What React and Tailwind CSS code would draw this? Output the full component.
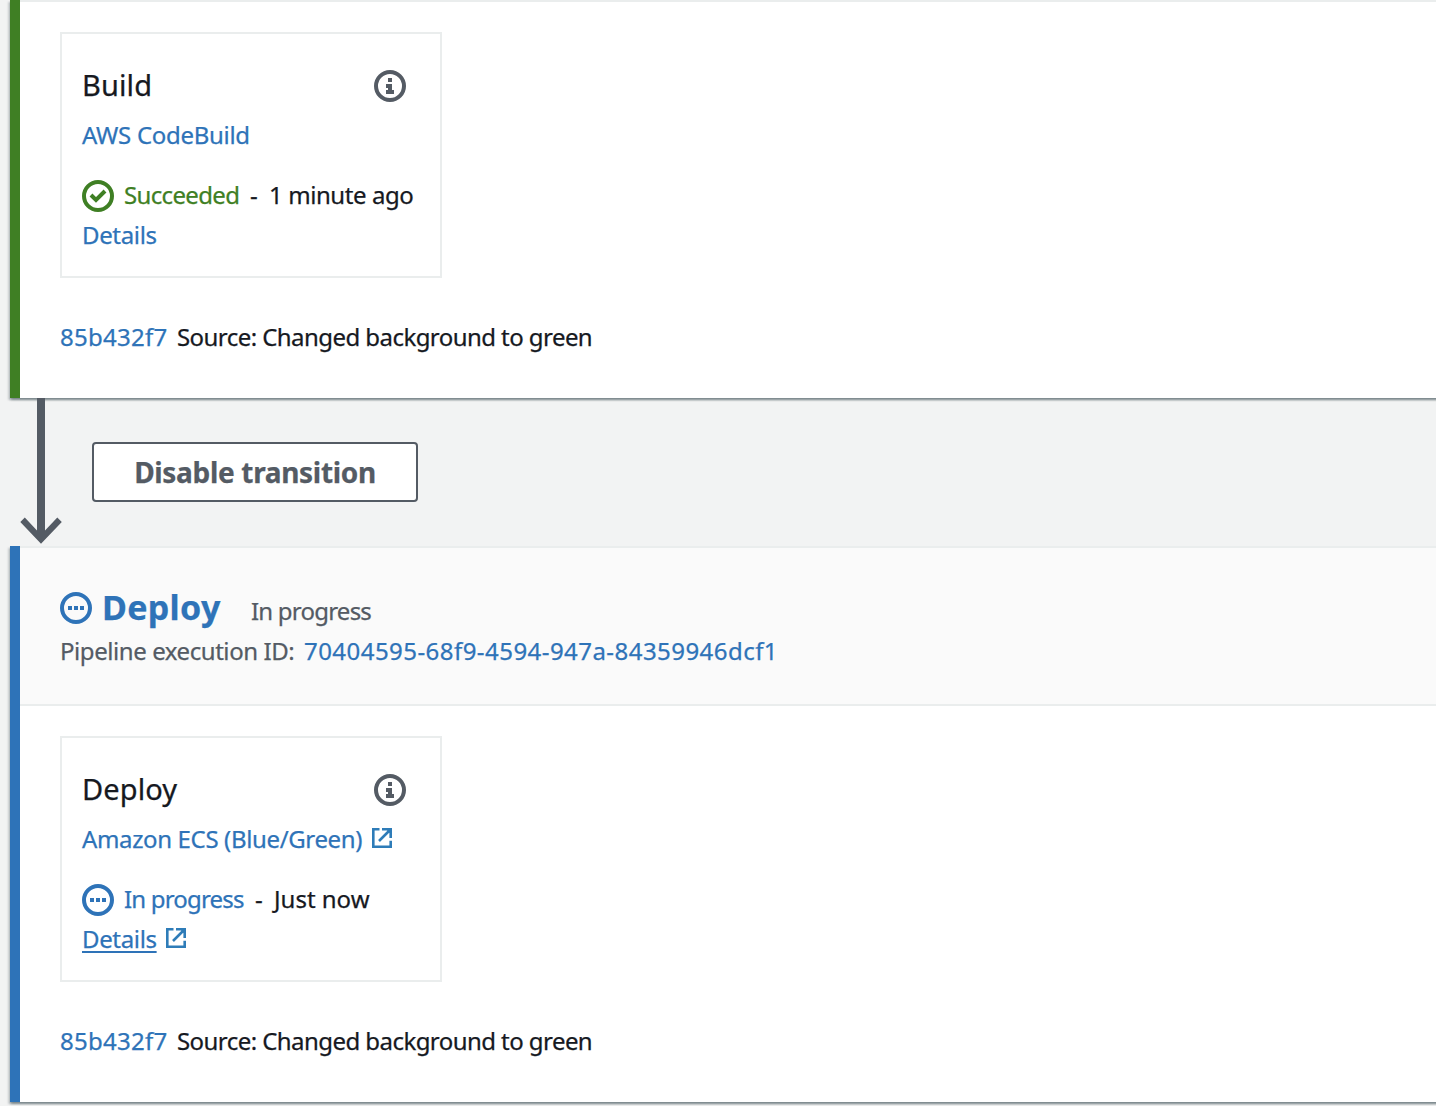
import React from "react";

const SHADOW = "shadow-[0_2px_2px_0_rgba(0,28,36,0.3),2px_2px_2px_0_rgba(0,28,36,0.15),-2px_2px_2px_0_rgba(0,28,36,0.15)]";

function InfoIcon() {
  return (
    <svg className="mt-0.5 size-8 shrink-0" viewBox="0 0 32 32" fill="none">
      <circle cx="16" cy="16" r="14" stroke="#545b64" strokeWidth="4" />
      <path d="M14 8h4v4h-4zM12 14h6v6h2v4h-8v-4h2v-2h-2z" fill="#545b64" />
    </svg>
  );
}

function ProgressIcon() {
  return (
    <svg className="mt-0.5 size-8 shrink-0" viewBox="0 0 32 32" fill="none">
      <circle cx="16" cy="16" r="14" stroke="#2e73b8" strokeWidth="4" />
      <path d="M8 14h4v4H8zM14 14h4v4h-4zM20 14h4v4h-4z" fill="#2e73b8" />
    </svg>
  );
}

function SuccessIcon() {
  return (
    <svg className="mt-0.5 size-8 shrink-0" viewBox="0 0 32 32" fill="none">
      <circle cx="16" cy="16" r="14" stroke="#3f7f24" strokeWidth="4" />
      <path d="M9 15l5 5 9-9" stroke="#3f7f24" strokeWidth="4" />
    </svg>
  );
}

function ExternalIcon() {
  return (
    <svg className="mb-0.5 size-5 shrink-0" viewBox="0 0 20 20" fill="none" stroke="#2e7cb8" strokeWidth="2.6">
      <path d="M7.5 1.3H1.3v17.4h17.4v-6" />
      <path d="M10 1.3h8.7V10M18 2L7 13" />
      <path d="M13 0h7v7z" fill="#2e7cb8" stroke="none" />
    </svg>
  );
}

function Commit() {
  return (
    <div className="flex h-10 items-center text-2xl leading-10">
      <a className="w-[117px] tracking-[0.25px] text-[#2e73b8]">85b432f7</a>
      <span className="tracking-[-0.56px]">Source: Changed background to green</span>
    </div>
  );
}

function Card({ title, children }) {
  return (
    <div className="h-[246px] w-[382px] border-2 border-[#eaeded] bg-white px-5 pt-[31px] text-2xl leading-10">
      <div className="flex h-10 items-center justify-between pr-3.5">
        {title}
        <InfoIcon />
      </div>
      {children}
    </div>
  );
}

export default function App() {
  return (
    <div className="h-[1106px] overflow-hidden whitespace-nowrap bg-[#f2f3f3] pl-2.5 font-['Noto_Sans',sans-serif] text-[#16191f] [-webkit-text-stroke:0.25px]">
      <section className={`-mr-2.5 flex h-[398px] ${SHADOW}`}>
        <div className="w-2.5 bg-[#3f7f24]" />
        <div className="flex-1 border-t-2 border-[#eaeded] bg-white pl-10 pt-[30px]">
          <Card title={<h3 className="text-[29px] tracking-[0.1px]">Build</h3>}>
            <div className="mt-2.5 tracking-[-0.3px] text-[#2e73b8]">AWS CodeBuild</div>
            <div className="mt-5 flex h-10 items-center">
              <SuccessIcon />
              <span className="ml-2.5 w-[126px] tracking-[-0.65px] text-[#3f7f24]">Succeeded</span>
              <span className="w-[19px]">-</span>
              <span className="tracking-[-0.42px]">1 minute ago</span>
            </div>
            <div className="tracking-[-0.35px] text-[#2e73b8]">Details</div>
          </Card>
          <div className="mt-[39px]">
            <Commit />
          </div>
        </div>
      </section>

      <div className="flex h-[148px]">
        <svg className="ml-2.5 h-[148px] w-[42px]" viewBox="0 0 42 148">
          <path d="M17 0h8v132.5l12.3-13L41.8 124 21 145.8.3 124l4.5-4.5 12.2 13z" fill="#545b64" />
        </svg>
        <button className="ml-[30px] mt-11 flex h-[60px] w-[326px] items-center justify-center rounded-[4px] border-2 border-[#545b64] bg-white pb-px text-[28px] font-bold tracking-[-0.32px] text-[#545b64]">
          Disable transition
        </button>
      </div>

      <section className={`-mr-2.5 flex h-[556px] ${SHADOW}`}>
        <div className="w-2.5 bg-[#2e73b8]" />
        <div className="flex-1 bg-white">
          <header className="h-[160px] border-y-2 border-[#eaeded] bg-[#fafafa] pl-10 pt-[34px] text-2xl text-[#545b64]">
            <div className="flex h-[50px] items-center">
              <ProgressIcon />
              <h2 className="ml-2.5 w-[149px] text-[34px] font-bold leading-[50px] tracking-[0.3px] text-[#2e73b8]">Deploy</h2>
              <span className="mt-[7px] leading-10 tracking-[-0.78px]">In progress</span>
            </div>
            <div className="-mt-px flex leading-10">
              <span className="w-[244px] tracking-[-0.43px]">Pipeline execution ID:</span>
              <a className="tracking-[0.45px] text-[#2e73b8]">70404595-68f9-4594-947a-84359946dcf1</a>
            </div>
          </header>
          <div className="pl-10 pt-[30px]">
            <Card title={<h3 className="text-[29px] tracking-[0.1px]">Deploy</h3>}>
              <div className="mt-2.5 flex h-10 items-center text-[#2e73b8]">
                <span className="mr-[9px] w-[281px] tracking-[-0.36px]">Amazon ECS (Blue/Green)</span>
                <ExternalIcon />
              </div>
              <div className="mt-5 flex h-10 items-center">
                <ProgressIcon />
                <span className="ml-2.5 w-[131px] tracking-[-0.82px] text-[#2e73b8]">In progress</span>
                <span className="w-[19px]">-</span>
                <span>Just now</span>
              </div>
              <div className="flex h-10 items-center text-[#2e73b8]">
                <span className="mr-[9px] w-[75px] tracking-[-0.35px] underline decoration-2 underline-offset-[3px] [text-decoration-skip-ink:none]">Details</span>
                <ExternalIcon />
              </div>
            </Card>
            <div className="mt-[39px]">
              <Commit />
            </div>
          </div>
        </div>
      </section>
    </div>
  );
}
